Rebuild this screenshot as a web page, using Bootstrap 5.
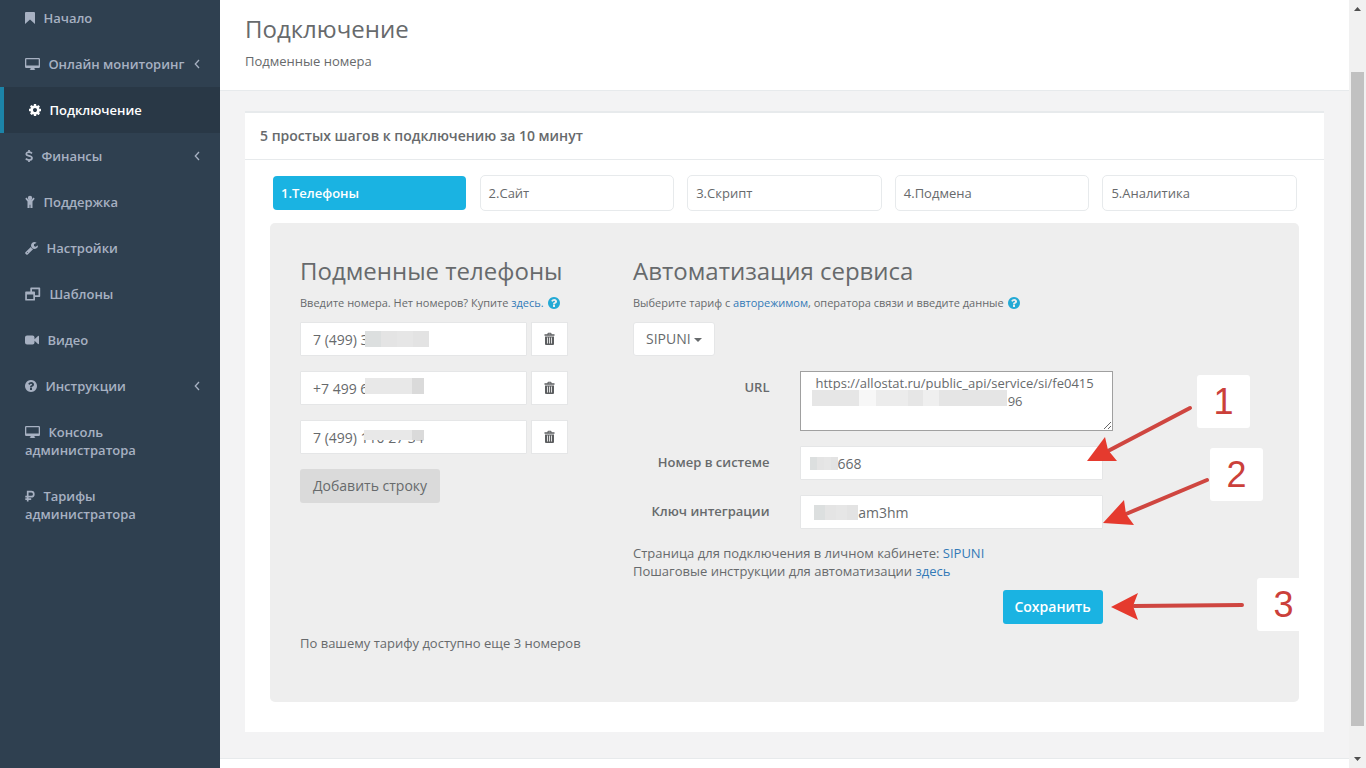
<!DOCTYPE html>
<html lang="ru">
<head>
<meta charset="utf-8">
<meta name="viewport" content="width=device-width, initial-scale=1">
<title>Подключение</title>
<link href="https://cdn.jsdelivr.net/npm/bootstrap@5.3.0/dist/css/bootstrap.min.css" rel="stylesheet">
<style>
  body { font: 13px/18px "Open Sans", sans-serif; color: #676a6c; background: #f3f3f4; }
  a { color: #337ab7; text-decoration: none; }
  h1, h2 { font-size: 24px; line-height: 26px; font-weight: 400; }
  .ico { fill: currentColor; height: 14px; vertical-align: -2px; }

  /* sidebar */
  .side { flex: 0 0 220px; background: #2f4050; }
  .side .nav-link { padding: 14px 20px 14px 25px; color: #a7b1c2; font-weight: 600; }
  .side .nav-item:first-child .nav-link { padding-top: 9px; }
  .side .nav-link.active { color: #fff; background: #293846; border-left: 4px solid #1c84a8; }
  .side .nav-link .ico { margin-right: 5px; }
  .side .chev { fill: none; stroke: currentColor; width: 6px; height: 10px; float: right; margin-top: 4px; }

  /* page */
  .page-head { padding: 16px 25px 20px; border-bottom: 1px solid #e7eaec; }
  .page-head h1 { margin-bottom: 10px; }
  .page-body { padding: 20px 25px 26px; }
  .ibox { border-top: 2px solid #e7eaec; }
  .ibox-head { padding: 14px 15px; font-size: 14px; font-weight: 600; border-bottom: 1px solid #e7eaec; }
  .ibox-body { padding: 15px 25px 30px; }
  .steps { display: grid; grid-template-columns: repeat(5, 1fr); gap: 13px; margin: 0 2px 12px; }
  .steps a { padding: 8px; border: 1px solid #e7eaec; border-radius: 5px; color: #676a6c; }
  .steps a.current { background: #1ab3e2; background-clip: padding-box; border-color: transparent; color: #fff; font-weight: 600; }
  .stage { background: #eee; border-radius: 5px; padding: 35px 30px 50px; }
  .stage .row { --bs-gutter-x: 30px; }
  .stage h2 { margin-bottom: 11px; }
  .hint { font-size: 11px; line-height: 16px; margin-bottom: 11px; white-space: nowrap; }
  .hint .ico { color: #23a9d5; height: 12px; vertical-align: -2px; margin-left: 1px; }
  .line { margin-bottom: 15px; }
  .line .form-control, .pick select { height: 34px; border: 1px solid #e5e6e7; border-radius: 1px; padding: 6px 12px; font-size: 14px; line-height: 20px; color: #676a6c; background: #fff; }
  .phone { display: grid; grid-template-columns: 1fr 37px; gap: 4px; margin-right: 35px; }
  .bin { border: 1px solid #e5e6e7; background: #fff; color: #5c5e60; padding: 0; }
  .line .col-form-label { font-weight: 600; padding-top: 7px; padding-bottom: 7px; }
  .pick { width: 82px; }
  .pick select { width: 100%; appearance: none; border-radius: 3px; }
  .pick::after { content: ""; position: absolute; right: 13px; top: 16px; border: 4px solid transparent; border-top-color: currentColor; border-bottom: 0; pointer-events: none; }
  .url { display: block; width: 313px; height: 60px; padding: 2px 15px; border: 1px solid #a0a0a0; color: #676a6c; }
  .btn { font-size: 14px; line-height: 20px; padding: 7px 13px; border-radius: 3px; }
  .btn-add { background: #dadada; color: #676a6c; }
  .btn-save { background: #1ab3e2; color: #fff; font-weight: 600; width: 100px; padding: 7px 0; }
  .gap-top { margin-top: 10px; }

  /* pixelated patches over private digits */
  .mosaic { position: absolute; background: linear-gradient(90deg, #dcdfdf 0 25%, #e4e4e4 25% 50%, #e6e6e6 50% 75%, #e3e3e3 75%); height: 16px; }
  .m-phone1 { left: 65px; top: 9px; width: 64px; }
  .m-phone2 { left: 65px; top: 7px; width: 59px; }
  .m-phone3 { left: 64px; top: 10px; width: 60px; height: 10px; }
  .m-phone2, .m-phone3 { background: linear-gradient(90deg, #e8e8e8 0 80%, #dadada 80%); }
  .m-url { left: 27px; top: 19px; width: 195px; background: linear-gradient(90deg, #e6e6e6 0 24%, #f7f7f7 24% 33%, #ececec 33% 49%, #e6e6e6 49% 57%, #efefef 57% 65%, #e5e5e5 65%); }
  .m-num { left: 25px; top: 11px; width: 28px; height: 13px; }
  .m-key { left: 29px; top: 10px; width: 44px; height: 15px; }

  /* red callouts */
  .marks { position: absolute; inset: 0; width: 100%; height: 100%; overflow: hidden; pointer-events: none; }
  .marks line { stroke: #cf4640; stroke-width: 4; stroke-linecap: round; }
  .marks polygon { fill: #e53a2e; }
  .num { position: absolute; width: 53px; height: 53px; background: #fff; border-radius: 3px; color: #cb403a; font: 36px/53px "Liberation Sans", Arial, sans-serif; text-align: center; }
  .num-1 { left: 927px; top: 152px; }
  .num-2 { left: 940px; top: 225px; }
  .num-3 { left: 987px; top: 355px; }

  .foot { border-top: 1px solid #e7eaec; }

  /* scroll track */
  .track { flex: 0 0 17px; background: #f1f1f1; }
  .track .ar { width: 7px; margin: 7px 5px; height: 4px; fill: #505050; display: block; }
  .thumb { margin: 54px 2px 24px; background: #c1c1c1; }
</style>
</head>
<body>
<svg class="d-none">
  <symbol id="i-bookmark" viewBox="0 0 10 14"><path d="M1 1h8a1 1 0 0 1 1 1v11l-5-4.500-5 4.500V2a1 1 0 0 1 1-1z"/></symbol>
  <symbol id="i-desktop" viewBox="0 0 15 14"><path fill-rule="evenodd" d="M1.200 1h12.600A1.200 1.200 0 0 1 15 2.200v7.600a1.200 1.200 0 0 1-1.200 1.200H9.500v1.200l1 .8H4.500l1-.8V11H1.200A1.200 1.200 0 0 1 0 9.800V2.200A1.200 1.200 0 0 1 1.200 1zM1.300 2.300v6.200h12.400V2.300z"/></symbol>
  <symbol id="i-cog" viewBox="128 0 1536 1792"><path d="M1152 896q0-106-75-181t-181-75-181 75-75 181 75 181 181 75 181-75 75-181zm512-109v222q0 12-8 23t-20 13l-185 28q-19 54-39 91 35 50 107 138 10 12 10 25t-9 23q-27 37-99 108t-94 71q-12 0-26-9l-138-108q-44 23-91 38-16 136-29 186-7 28-36 28h-222q-14 0-24.500-8.500t-11.500-21.500l-28-184q-49-16-90-37l-141 107q-10 9-25 9-14 0-25-11-126-114-165-168-7-10-7-23 0-12 8-23 15-21 51-66.500t54-70.500q-27-50-41-99l-183-27q-13-2-21-12.500t-8-23.500v-222q0-12 8-23t19-13l186-28q14-46 39-92-40-57-107-138-10-12-10-24 0-10 9-23 26-36 98.500-107.500t94.500-71.500q13 0 26 10l138 107q44-23 91-38 16-136 29-186 7-28 36-28h222q14 0 24.500 8.500t11.500 21.500l28 184q49 16 90 37l142-107q9-9 24-9 13 0 25 10 129 119 165 170 7 8 7 22 0 12-8 23-15 21-51 66.500t-54 70.500q26 50 41 98l183 28q13 2 21 12.500t8 23.500z"/></symbol>
  <symbol id="i-dollar" viewBox="0 0 8 14"><path fill="none" stroke="currentColor" stroke-width="1.700" d="M7 4.300C6 3.400 5 3.100 4 3.100c-1.700 0-2.700.8-2.700 1.900C1.300 7.500 7 6.300 7 9c0 1.300-1.200 2-2.900 2C2.800 11 1.600 10.500.8 9.600M4 1v2M4 11v2"/></symbol>
  <symbol id="i-child" viewBox="0 0 10 14"><circle cx="5" cy="3" r="2.200"/><path d="M1.500 2.500 3.500 4.800h3l2-2.300 1.200 1.300L7.500 6.500V13H5.400V9.800h-.8V13H2.500V6.500L.3 3.800z"/></symbol>
  <symbol id="i-wrench" viewBox="64 0 1664 1792"><path d="M448 1472q0-26-19-45t-45-19-45 19-19 45 19 45 45 19 45-19 19-45zm644-420l-682 682q-37 37-90 37-52 0-91-37l-106-108q-38-36-38-90 0-53 38-91l681-681q39 98 114.500 173.500t173.500 114.500zm634-435q0 39-23 106-47 134-164.500 217.500t-258.500 83.500q-185 0-316.500-131.500t-131.500-316.500 131.500-316.500 316.500-131.500q58 0 121.500 16.500t107.500 46.500q16 11 16 28t-16 28l-293 169v224l193 107q5-3 79-48.500t135.500-81 70.500-35.500q15 0 23.500 10t8.500 25z"/></symbol>
  <symbol id="i-restore" viewBox="0 0 16 14"><path fill-rule="evenodd" d="M6 .5h8.500a.7.7 0 0 1 .7.7v8a.7.7 0 0 1-.7.7H10v3a.7.7 0 0 1-.7.7H.9a.7.7 0 0 1-.7-.7V5.200a.7.7 0 0 1 .7-.7h4.400V1.200A.7.7 0 0 1 6 .5zM7 2.200v2.300h2.300a.7.7 0 0 1 .7.700v3h3.500v-6zM1.900 7.500V12h6.400V7.500z"/></symbol>
  <symbol id="i-video" viewBox="0 0 14 14"><path d="M2 2.500h5.500a2 2 0 0 1 2 2v1.700L13 2.900c.4-.3 1 0 1 .5v7.200c0 .5-.6.8-1 .5L9.500 7.800v1.700a2 2 0 0 1-2 2H2a2 2 0 0 1-2-2v-5a2 2 0 0 1 2-2z"/></symbol>
  <symbol id="i-question" viewBox="128 128 1536 1536"><path d="M1024 1376v-192q0-14-9-23t-23-9h-192q-14 0-23 9t-9 23v192q0 14 9 23t23 9h192q14 0 23-9t9-23zm256-672q0-88-55.500-163t-138.500-116-170-41q-243 0-371 213-15 24 8 42l132 100q7 6 19 6 16 0 25-12 53-68 86-92 34-24 86-24 48 0 85.500 26t37.500 59q0 38-20 61t-68 45q-63 28-115.500 86.500t-52.500 125.500v36q0 14 9 23t23 9h192q14 0 23-9t9-23q0-19 21.500-49.500t54.500-49.500q32-18 49-28.500t46-35 44.500-48 28-60.500 12.500-81zm384 192q0 209-103 385.500t-279.500 279.500-385.500 103-385.500-103-279.500-279.500-103-385.500 103-385.500 279.500-279.500 385.500-103 385.500 103 279.500 279.500 103 385.500z"/></symbol>
  <symbol id="i-ruble" viewBox="0 0 10 14"><path fill="none" stroke="currentColor" stroke-width="1.700" d="M2.700 12.500V2.700h3.600a2.400 2.400 0 0 1 0 5H.3M.3 10.100h5.900"/></symbol>
  <symbol id="i-trash" viewBox="0 0 11 14"><path fill-rule="evenodd" d="M3.500 2.200V1.500A.9.9 0 0 1 4.400.8h2.200a.9.9 0 0 1 .9.700v.7h3v1.600H.5V2.200zM4.500 1.700v.5h2v-.5zM1 4.500h9v7.600a1 1 0 0 1-1 1H2a1 1 0 0 1-1-1zM3 5.500v6h.8v-6zM5.100 5.500v6h.8v-6zM7.200 5.500v6H8v-6z"/></symbol>
  <symbol id="i-chev" viewBox="0 0 6 10"><path d="M5 1 1.300 5 5 9" stroke-width="1.300"/></symbol>
</svg>

<div class="d-flex min-vh-100">
  <nav class="side">
    <ul class="nav flex-column flex-nowrap">
      <li class="nav-item"><a class="nav-link" href="#"><svg class="ico" width="10"><use href="#i-bookmark"/></svg> Начало</a></li>
      <li class="nav-item"><a class="nav-link" href="#"><svg class="chev"><use href="#i-chev"/></svg><svg class="ico" width="15"><use href="#i-desktop"/></svg> Онлайн мониторинг</a></li>
      <li class="nav-item"><a class="nav-link active" href="#"><svg class="ico" width="12"><use href="#i-cog"/></svg> Подключение</a></li>
      <li class="nav-item"><a class="nav-link" href="#"><svg class="chev"><use href="#i-chev"/></svg><svg class="ico" width="8"><use href="#i-dollar"/></svg> Финансы</a></li>
      <li class="nav-item"><a class="nav-link" href="#"><svg class="ico" width="10"><use href="#i-child"/></svg> Поддержка</a></li>
      <li class="nav-item"><a class="nav-link" href="#"><svg class="ico" width="13"><use href="#i-wrench"/></svg> Настройки</a></li>
      <li class="nav-item"><a class="nav-link" href="#"><svg class="ico" width="16"><use href="#i-restore"/></svg> Шаблоны</a></li>
      <li class="nav-item"><a class="nav-link" href="#"><svg class="ico" width="14"><use href="#i-video"/></svg> Видео</a></li>
      <li class="nav-item"><a class="nav-link" href="#"><svg class="chev"><use href="#i-chev"/></svg><svg class="ico" width="12"><use href="#i-question"/></svg> Инструкции</a></li>
      <li class="nav-item"><a class="nav-link" href="#"><svg class="ico" width="15"><use href="#i-desktop"/></svg> Консоль<br>администратора</a></li>
      <li class="nav-item"><a class="nav-link" href="#"><svg class="ico" width="10"><use href="#i-ruble"/></svg> Тарифы<br>администратора</a></li>
    </ul>
  </nav>

  <div class="d-flex flex-column flex-grow-1">
    <header class="page-head bg-white">
      <h1>Подключение</h1>
      <div>Подменные номера</div>
    </header>

    <main class="page-body">
      <section class="ibox bg-white">
        <div class="ibox-head">5 простых шагов к подключению за 10 минут</div>
        <div class="ibox-body">
          <nav class="steps">
            <a class="current" href="#">1.Телефоны</a>
            <a href="#">2.Сайт</a>
            <a href="#">3.Скрипт</a>
            <a href="#">4.Подмена</a>
            <a href="#">5.Аналитика</a>
          </nav>

          <div class="stage position-relative">
            <div class="row">
              <div class="col-4">
                <h2 class="text-nowrap">Подменные телефоны</h2>
                <p class="hint">Введите номера. Нет номеров? Купите <a href="#">здесь.</a> <svg class="ico" width="12"><use href="#i-question"/></svg></p>
                <div class="line phone position-relative">
                  <input class="form-control" type="text" aria-label="Телефон 1" value="7 (499) 3">
                  <button class="bin" type="button" aria-label="Удалить"><svg class="ico" width="11"><use href="#i-trash"/></svg></button>
                  <span class="mosaic m-phone1"></span>
                </div>
                <div class="line phone position-relative">
                  <input class="form-control" type="text" aria-label="Телефон 2" value="+7 499 6&emsp;&emsp;&emsp;&nbsp;3">
                  <button class="bin" type="button" aria-label="Удалить"><svg class="ico" width="11"><use href="#i-trash"/></svg></button>
                  <span class="mosaic m-phone2"></span>
                </div>
                <div class="line phone position-relative">
                  <input class="form-control" type="text" aria-label="Телефон 3" value="7 (499) 110 27 34">
                  <button class="bin" type="button" aria-label="Удалить"><svg class="ico" width="11"><use href="#i-trash"/></svg></button>
                  <span class="mosaic m-phone3"></span>
                </div>
                <button class="btn btn-add border-0" type="button">Добавить строку</button>
              </div>

              <form class="col-6">
                <h2>Автоматизация сервиса</h2>
                <p class="hint">Выберите тариф с <a href="#">авторежимом</a>, оператора связи и введите данные <svg class="ico" width="12"><use href="#i-question"/></svg></p>
                <div class="line pick position-relative">
                  <select aria-label="Оператор"><option>SIPUNI</option></select>
                </div>
                <div class="row line">
                  <label class="col-4 col-form-label border-0 text-end" for="url">URL</label>
                  <div class="col-8 position-relative">
                    <textarea class="url" id="url">https://allostat.ru/public_api/service/si/fe0415
&emsp;&emsp;&emsp;&emsp;&emsp;&emsp;&emsp;&emsp;&emsp;&emsp;&emsp;&emsp;&emsp;&emsp;&nbsp;&nbsp;&nbsp;96</textarea>
                    <span class="mosaic m-url"></span>
                  </div>
                </div>
                <div class="row line">
                  <label class="col-4 col-form-label border-0 text-end" for="num">Номер в системе</label>
                  <div class="col-8 position-relative">
                    <input class="form-control" id="num" type="text" value="&emsp;&nbsp;&nbsp;&nbsp;668">
                    <span class="mosaic m-num"></span>
                  </div>
                </div>
                <div class="row line">
                  <label class="col-4 col-form-label border-0 text-end" for="key">Ключ интеграции</label>
                  <div class="col-8 position-relative">
                    <input class="form-control" id="key" type="text" value="&emsp;&emsp;&emsp;&nbsp;am3hm">
                    <span class="mosaic m-key"></span>
                  </div>
                </div>
                <div>Страница для подключения в личном кабинете: <a href="#">SIPUNI</a></div>
                <div>Пошаговые инструкции для автоматизации <a href="#">здесь</a></div>
                <div class="gap-top d-flex justify-content-end">
                  <button class="btn btn-save border-0" type="button">Сохранить</button>
                </div>
              </form>
            </div>
            <div class="gap-top">По вашему тарифу доступно еще 3 номеров</div>

            <svg class="marks">
              <line x1="920" y1="185" x2="838" y2="228"/>
              <polygon points="817,238 835,214 838,227 847,238"/>
              <line x1="937" y1="257" x2="856" y2="291"/>
              <polygon points="833,300 854,277 856,291 864,302"/>
              <line x1="972" y1="382" x2="864" y2="383"/>
              <polygon points="841,384 868,370 863,383 868,397"/>
            </svg>
            <span class="num num-1">1</span>
            <span class="num num-2">2</span>
            <span class="num num-3">3</span>
          </div>
        </div>
      </section>
    </main>
    <footer class="foot bg-white flex-grow-1"></footer>
  </div>

  <div class="track d-flex flex-column" aria-hidden="true">
    <svg class="ar" viewBox="0 0 7 4"><path d="M0 4 3.500 0 7 4z"/></svg>
    <div class="thumb flex-grow-1"></div>
    <svg class="ar" viewBox="0 0 7 4"><path d="M0 0h7L3.500 4z"/></svg>
  </div>
</div>
<script src="https://cdn.jsdelivr.net/npm/bootstrap@5.3.0/dist/js/bootstrap.bundle.min.js"></script>
</body>
</html>
